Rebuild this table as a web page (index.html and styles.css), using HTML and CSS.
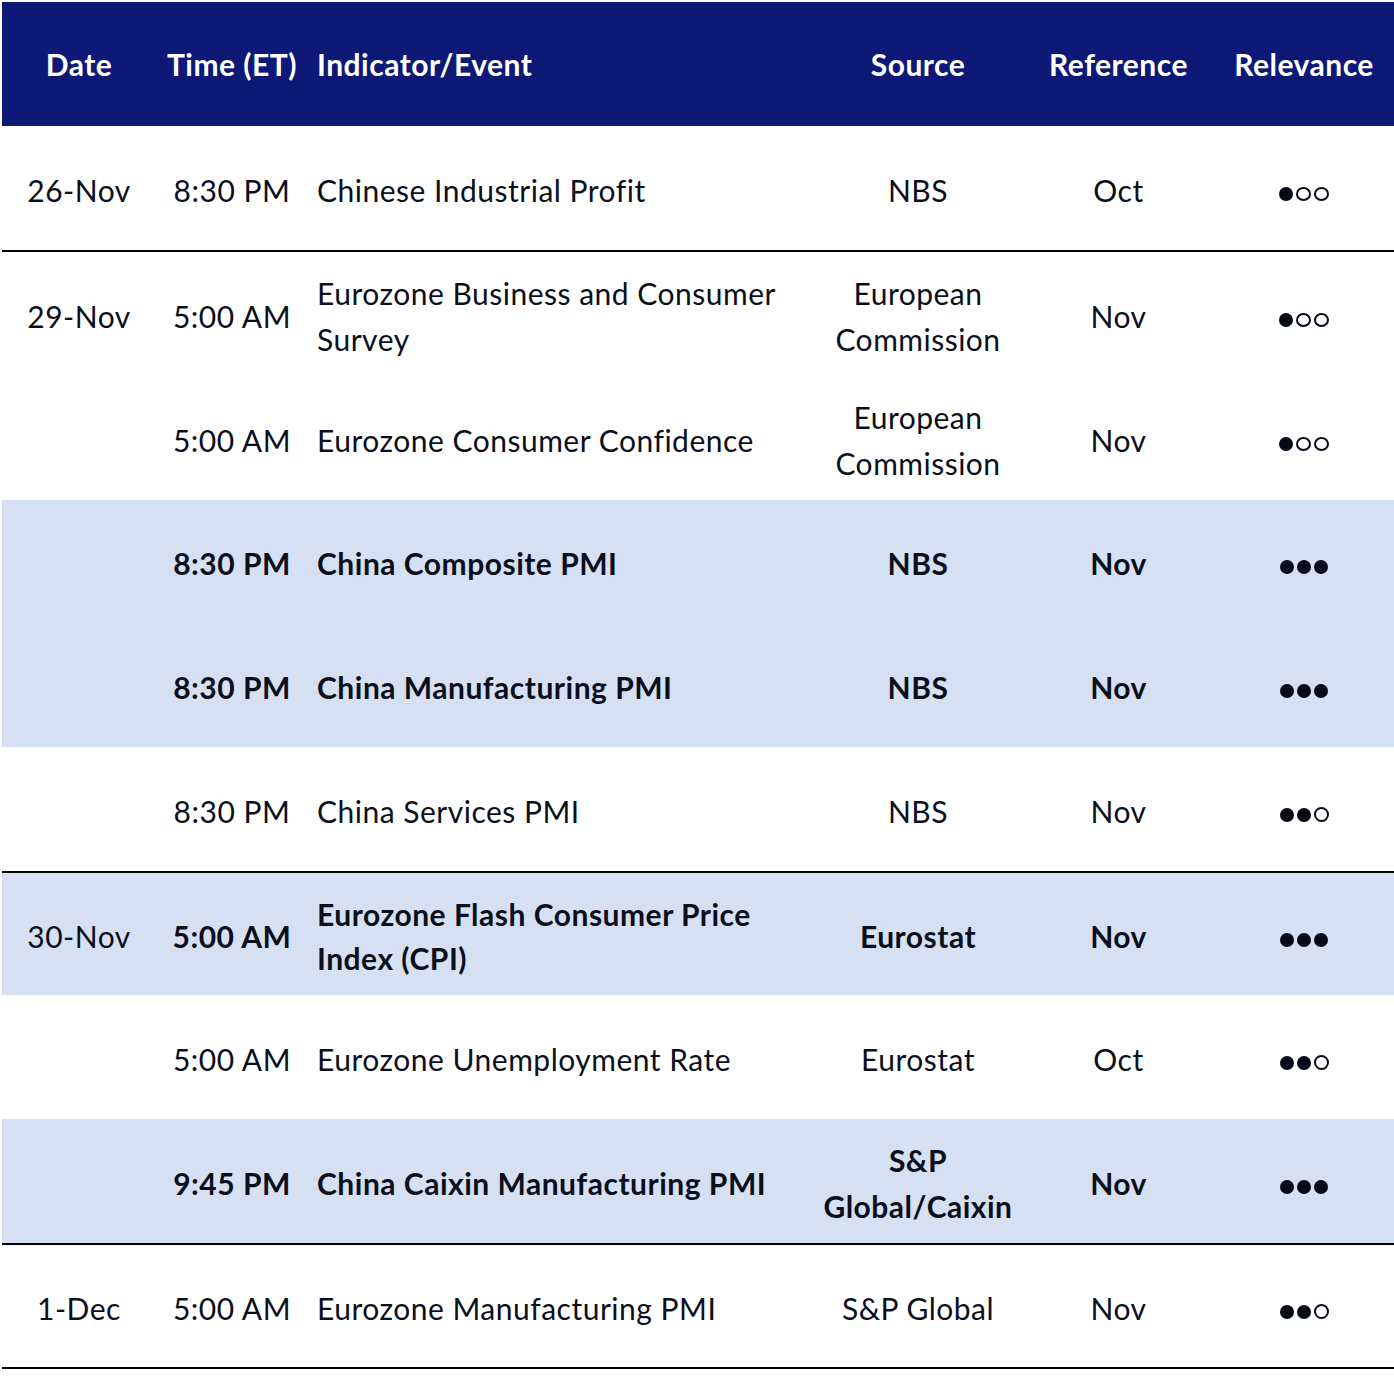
FILE: index.html
```html
<!DOCTYPE html>
<html lang="en">
<head>
<meta charset="utf-8">
<title>Economic Calendar</title>
<link rel="stylesheet" href="styles.css">
</head>
<body>
<div class="wrap">
<table class="cal">
  <colgroup>
    <col class="c-date"><col class="c-time"><col class="c-ind"><col class="c-src"><col class="c-ref"><col class="c-rel">
  </colgroup>
  <thead>
    <tr>
      <th>Date</th><th>Time (ET)</th><th class="ind">Indicator/Event</th><th>Source</th><th>Reference</th><th class="rel">Relevance</th>
    </tr>
  </thead>
  <tbody>
    <tr class="end">
      <td>26-Nov</td><td>8:30 PM</td><td class="ind">Chinese Industrial Profit</td><td>NBS</td><td>Oct</td>
      <td class="rel"><span class="dots"><i class="d f"></i><i class="d o"></i><i class="d o"></i></span></td>
    </tr>
    <tr>
      <td>29-Nov</td><td>5:00 AM</td><td class="ind">Eurozone Business and Consumer<br>Survey</td><td>European<br>Commission</td><td>Nov</td>
      <td class="rel"><span class="dots"><i class="d f"></i><i class="d o"></i><i class="d o"></i></span></td>
    </tr>
    <tr>
      <td></td><td>5:00 AM</td><td class="ind">Eurozone Consumer Confidence</td><td>European<br>Commission</td><td>Nov</td>
      <td class="rel"><span class="dots"><i class="d f"></i><i class="d o"></i><i class="d o"></i></span></td>
    </tr>
    <tr class="hi r123">
      <td></td><td>8:30 PM</td><td class="ind">China Composite PMI</td><td>NBS</td><td>Nov</td>
      <td class="rel"><span class="dots"><i class="d f"></i><i class="d f"></i><i class="d f"></i></span></td>
    </tr>
    <tr class="hi">
      <td></td><td>8:30 PM</td><td class="ind">China Manufacturing PMI</td><td>NBS</td><td>Nov</td>
      <td class="rel"><span class="dots"><i class="d f"></i><i class="d f"></i><i class="d f"></i></span></td>
    </tr>
    <tr class="end">
      <td></td><td>8:30 PM</td><td class="ind">China Services PMI</td><td>NBS</td><td>Nov</td>
      <td class="rel"><span class="dots"><i class="d f"></i><i class="d f"></i><i class="d r"></i></span></td>
    </tr>
    <tr class="hi r122">
      <td class="norm">30-Nov</td><td>5:00 AM</td><td class="ind tight">Eurozone Flash Consumer Price<br>Index (CPI)</td><td>Eurostat</td><td>Nov</td>
      <td class="rel"><span class="dots"><i class="d f"></i><i class="d f"></i><i class="d f"></i></span></td>
    </tr>
    <tr>
      <td></td><td>5:00 AM</td><td class="ind">Eurozone Unemployment Rate</td><td>Eurostat</td><td>Oct</td>
      <td class="rel"><span class="dots"><i class="d f"></i><i class="d f"></i><i class="d r"></i></span></td>
    </tr>
    <tr class="hi end">
      <td></td><td>9:45 PM</td><td class="ind">China Caixin Manufacturing PMI</td><td>S&amp;P<br>Global/Caixin</td><td>Nov</td>
      <td class="rel"><span class="dots"><i class="d f"></i><i class="d f"></i><i class="d f"></i></span></td>
    </tr>
    <tr class="end r122">
      <td>1-Dec</td><td>5:00 AM</td><td class="ind">Eurozone Manufacturing PMI</td><td>S&amp;P Global</td><td>Nov</td>
      <td class="rel"><span class="dots"><i class="d f"></i><i class="d f"></i><i class="d r"></i></span></td>
    </tr>
  </tbody>
</table>
</div>
</body>
</html>
```
FILE: styles.css
```css
html, body {
  margin: 0;
  padding: 0;
  background: #ffffff;
}
.wrap {
  padding: 2px 0 0 2px;
}
.cal {
  width: 1392px;
  table-layout: fixed;
  border-collapse: separate;
  border-spacing: 0;
  font-family: Lato, "Liberation Sans", sans-serif;
  font-size: 30px;
  letter-spacing: 0.5px;
  color: #0b0f1c;
}
.c-date { width: 154px; }
.c-time { width: 152px; }
.c-ind  { width: 510px; }
.c-src  { width: 200px; }
.c-ref  { width: 201px; }
.c-rel  { width: 175px; }

.cal th {
  background: #0e1876;
  color: #ffffff;
  font-weight: 700;
  height: 124px;
  padding: 0;
  text-align: center;
  vertical-align: middle;
}
.cal td {
  height: 121px;
  padding: 3px 0 0 0;
  text-align: center;
  vertical-align: middle;
  line-height: 46px;
  white-space: nowrap;
}
.cal th.ind, .cal td.ind {
  text-align: left;
  padding-left: 9px;
}
.cal th.rel, .cal td.rel {
  padding-right: 5px;
}
.cal tr.end td {
  border-bottom: 2px solid #000000;
}
.cal tr.r123 td { height: 120px; }
.cal tr.r122 td { height: 119px; }

.cal tr.hi td {
  background: #d6e0f3;
  font-weight: 700;
}
.cal tr.hi td.norm { font-weight: 400; }
.cal td.tight { line-height: 44px; }

.dots {
  display: inline-flex;
  align-items: center;
  gap: 3px;
  vertical-align: middle;
  letter-spacing: 0;
}
.d {
  display: inline-block;
  box-sizing: border-box;
  width: 14px;
  height: 14px;
  border-radius: 50%;
}
.d.f { background: #060a18; }
.d.r { width: 15px; height: 15px; border: 2px solid #060a18; background: transparent; }
.d.o { width: 15px; height: 14px; border: 2px solid #060a18; }
```
